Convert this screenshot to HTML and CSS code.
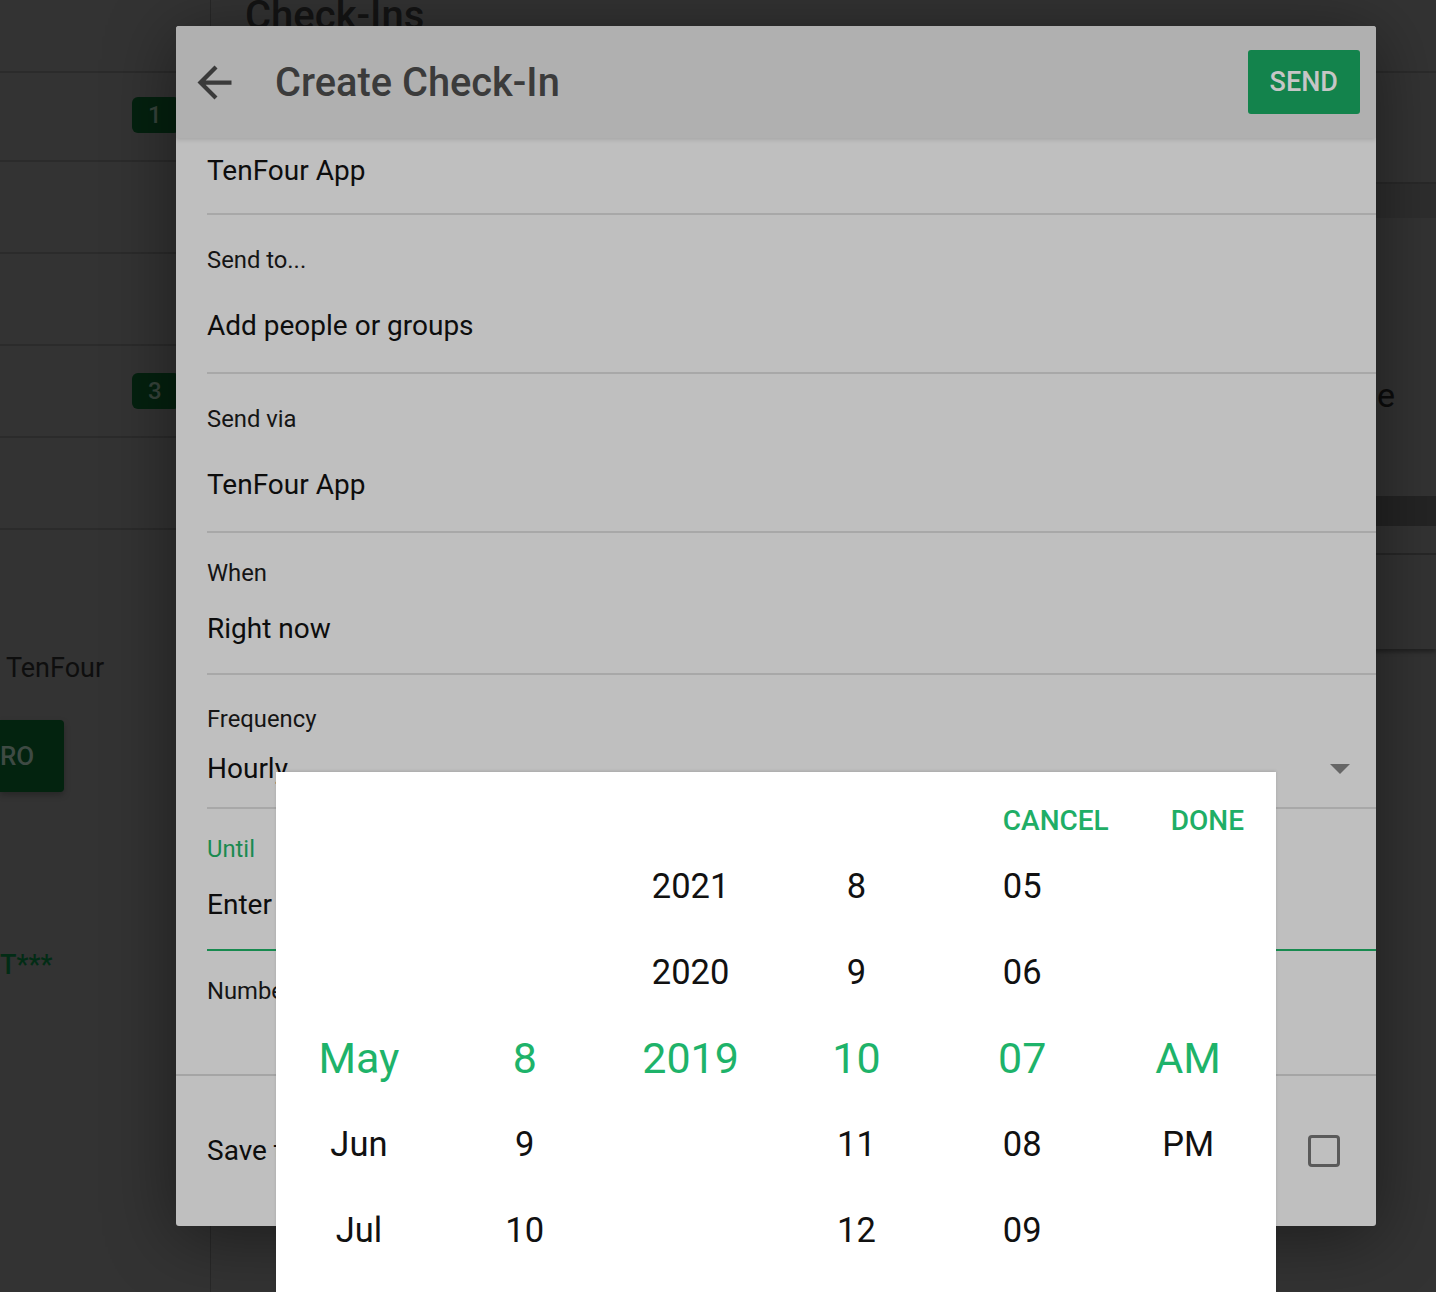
FILE: index.html
```html
<!DOCTYPE html>
<html lang="en">
<head>
    <meta charset="UTF-8">
    <meta name="viewport" content="width=device-width, initial-scale=1.0">
    <title>Create Check-In</title>
    <link rel="stylesheet" href="styles.css">
</head>
<body>
    <div class="page">
        <aside class="sidebar">
            <div class="sidebar-top"></div>
            <div class="nav-row nav-row-first"><span class="count">1</span></div>
            <div class="nav-row"></div>
            <div class="nav-row"></div>
            <div class="nav-row"><span class="count">3</span></div>
            <div class="nav-row"></div>
            <div class="promo">
                <p class="promo-text">TenFour</p>
                <a href="#" class="promo-btn">RO</a>
                <p class="promo-code">T***</p>
            </div>
        </aside>

        <main class="main">
            <div class="main-top">
                <h1>Check-Ins</h1>
            </div>
            <div class="summary"></div>
            <div class="tabs"></div>
            <div class="hero">Create your first check-in template</div>
            <div class="band"></div>
            <div class="list-head"></div>
            <div class="list-row"></div>
        </main>
    </div>

    <div class="dialog">
        <header class="dialog-bar">
            <svg class="back" viewBox="0 0 24 24" width="51" height="51">
                <path d="M20 11H7.83l5.59-5.59L12 4l-8 8 8 8 1.41-1.41L7.83 13H20v-2z" fill="currentColor"/>
            </svg>
            <h2>Create Check-In</h2>
            <button class="send">SEND</button>
        </header>

        <div class="dialog-body">
            <div class="field field-first">
                <span class="value">TenFour App</span>
            </div>
            <div class="field field-wide">
                <span class="label">Send to...</span>
                <span class="value">Add people or groups</span>
            </div>
            <div class="field field-wide">
                <span class="label">Send via</span>
                <span class="value">TenFour App</span>
            </div>
            <div class="field field-tight">
                <span class="label">When</span>
                <span class="value">Right now</span>
            </div>
            <div class="field field-select">
                <span class="label">Frequency</span>
                <span class="value">
                    Hourly
                    <svg class="caret" viewBox="7 10 10 5" width="20" height="10">
                        <path d="M7 10l5 5 5-5z" fill="currentColor"/>
                    </svg>
                </span>
            </div>
            <div class="field field-tight field-active">
                <span class="label">Until</span>
                <span class="value">Enter end date</span>
            </div>
            <div class="field field-last">
                <span class="label">Number of check-ins</span>
            </div>
        </div>

        <footer class="dialog-foot">
            <span class="value">Save to templates</span>
            <span class="checkbox"></span>
        </footer>
    </div>

    <div class="picker">
        <div class="picker-actions">
            <button class="picker-btn">CANCEL</button>
            <button class="picker-btn">DONE</button>
        </div>
        <div class="wheels">
            <div class="wheel">
                <span></span><span></span><span class="on">May</span><span>Jun</span><span>Jul</span>
            </div>
            <div class="wheel">
                <span></span><span></span><span class="on">8</span><span>9</span><span>10</span>
            </div>
            <div class="wheel">
                <span>2021</span><span>2020</span><span class="on">2019</span><span></span><span></span>
            </div>
            <div class="wheel">
                <span>8</span><span>9</span><span class="on">10</span><span>11</span><span>12</span>
            </div>
            <div class="wheel">
                <span>05</span><span>06</span><span class="on">07</span><span>08</span><span>09</span>
            </div>
            <div class="wheel">
                <span></span><span></span><span class="on">AM</span><span>PM</span><span></span>
            </div>
        </div>
    </div>
</body>
</html>
```

FILE: styles.css
```css
* {
    margin: 0;
    padding: 0;
    box-sizing: border-box;
}

body {
    font-family: Roboto, 'Noto Sans', sans-serif;
    background: #333;
    height: 1292px;
    overflow: hidden;
    position: relative;
    color: #111;
}

/* page behind the dialog (dimmed) */
.page {
    display: flex;
    height: 1292px;
}

.sidebar {
    width: 211px;
    border-right: 1px solid #282828;
}

.sidebar-top {
    height: 73px;
    border-bottom: 2px solid #2b2b2b;
}

.nav-row {
    height: 92px;
    border-bottom: 2px solid #2b2b2b;
    display: flex;
    align-items: center;
    justify-content: flex-end;
    padding-right: 30px;
}

.nav-row-first {
    height: 89px;
    padding-bottom: 4px;
}

.count {
    width: 48px;
    height: 36px;
    border-radius: 6px;
    background: #04210f;
    color: #37443c;
    font-size: 24px;
    font-weight: 500;
    display: flex;
    align-items: center;
    padding-left: 16px;
}

.promo {
    padding-top: 120px;
}

.promo-text {
    font-size: 27px;
    line-height: 36px;
    padding-left: 6px;
    color: #0e0e0e;
}

.promo-btn {
    display: inline-block;
    margin-top: 34px;
    height: 72px;
    line-height: 72px;
    width: 64px;
    border-radius: 0 4px 4px 0;
    background: #03230f;
    color: #3e4a43;
    font-size: 26px;
    font-weight: 500;
    text-decoration: none;
    box-shadow: 0 3px 6px rgba(0, 0, 0, 0.25);
}

.promo-code {
    margin-top: 155px;
    font-size: 27px;
    line-height: 36px;
    font-weight: 500;
    color: #022c15;
}

.main {
    flex: 1;
}

.main-top {
    height: 73px;
    border-bottom: 2px solid #2b2b2b;
    padding-left: 34px;
    overflow: hidden;
}

.main-top h1 {
    font-size: 40px;
    font-weight: 500;
    line-height: 48px;
    margin-top: -8px;
    color: #141414;
}

.summary {
    height: 111px;
    border-bottom: 2px solid #292929;
}

.tabs {
    height: 34px;
    background: #2e2e2e;
}

.hero {
    height: 278px;
    padding-top: 155px;
    padding-right: 41px;
    text-align: right;
    font-size: 34px;
    line-height: 44px;
    color: #0c0c0c;
    white-space: nowrap;
}

.band {
    height: 30px;
    background: #242424;
}

.list-head {
    height: 29px;
    border-bottom: 2px solid #282828;
}

.list-row {
    height: 94px;
    box-shadow: 0 3px 4px rgba(0, 0, 0, 0.35);
}

/* dialog */
.dialog {
    position: absolute;
    left: 176px;
    top: 26px;
    width: 1200px;
    height: 1200px;
    background: #bfbfbf;
    border-radius: 3px;
    overflow: hidden;
    box-shadow: 0 10px 70px rgba(0, 0, 0, 0.45);
    display: flex;
    flex-direction: column;
}

.dialog-bar {
    height: 112px;
    flex-shrink: 0;
    background: #b0b0b0;
    display: flex;
    align-items: center;
    padding: 0 16px 0 13px;
    color: #3a3a3a;
    box-shadow: 0 2px 4px rgba(0, 0, 0, 0.12);
    position: relative;
    z-index: 1;
}

.back {
    display: block;
}

.dialog-bar h2 {
    flex: 1;
    margin-left: 35px;
    font-size: 39.8px;
    font-weight: 500;
    color: #3b3b3b;
}

.send {
    height: 64px;
    padding: 0 22px;
    border: none;
    border-radius: 3px;
    background: #13834c;
    color: #c6c6c6;
    font-family: Roboto, sans-serif;
    font-size: 27px;
    font-weight: 500;
}

.dialog-body {
    flex: 1;
    padding-left: 31px;
}

.field {
    display: flex;
    flex-direction: column;
    border-bottom: 2px solid #a8a8a8;
}

.label {
    font-size: 23.8px;
    line-height: 30px;
    color: #151515;
}

.value {
    font-size: 28px;
    line-height: 36px;
    color: #0d0d0d;
}

.field-first {
    height: 77px;
    padding-top: 15px;
}

.field-wide {
    height: 159px;
    padding-top: 30px;
    gap: 33px;
}

.field-tight {
    height: 142px;
    padding-top: 25px;
    gap: 23px;
}

.field-select {
    height: 134px;
    padding-top: 29px;
    gap: 17px;
}

.field-select .value {
    display: flex;
    align-items: center;
    justify-content: space-between;
    padding-right: 26px;
}

.caret {
    color: #666;
    display: block;
}

.field-active {
    border-bottom-color: #178a4f;
}

.field-active .label {
    color: #1a8a50;
}

.field-last {
    flex: 1;
    border-bottom: none;
    padding-top: 25px;
}

.dialog-foot {
    height: 152px;
    flex-shrink: 0;
    border-top: 2px solid #a5a5a5;
    display: flex;
    align-items: center;
    justify-content: space-between;
    padding: 0 36px 0 31px;
}

.checkbox {
    width: 32px;
    height: 32px;
    border: 3px solid #5a5a5a;
    border-radius: 4px;
}

/* date & time picker sheet */
.picker {
    position: absolute;
    left: 276px;
    top: 772px;
    width: 1000px;
    height: 520px;
    background: #fff;
    box-shadow: 0 -1px 3px rgba(0, 0, 0, 0.12);
}

.picker-actions {
    display: flex;
    justify-content: flex-end;
    gap: 62px;
    padding: 26px 32px 0 0;
    height: 71px;
}

.picker-btn {
    border: none;
    background: none;
    font-family: Roboto, sans-serif;
    font-size: 28px;
    font-weight: 500;
    line-height: 34px;
    color: #1fae66;
}

.wheels {
    display: grid;
    grid-template-columns: repeat(6, 1fr);
    padding-right: 5px;
}

.wheel {
    display: flex;
    flex-direction: column;
}

.wheel span {
    height: 86px;
    display: flex;
    align-items: center;
    justify-content: center;
    font-size: 34.5px;
    color: #111;
}

.wheel .on {
    font-size: 43px;
    color: #1eb36a;
}
```
